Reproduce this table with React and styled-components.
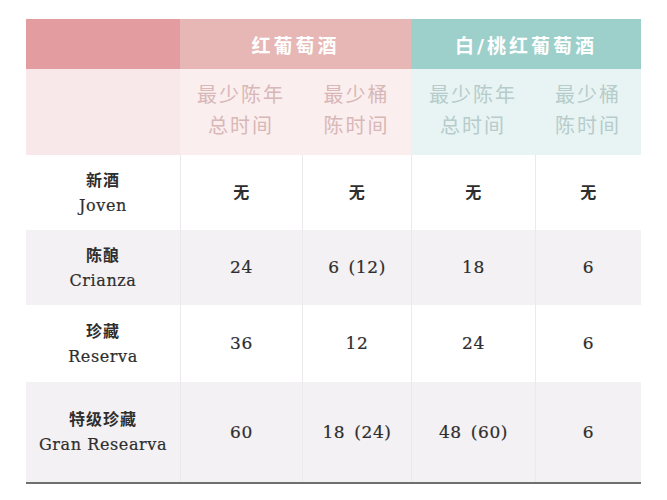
import React from 'react';
import styled, {createGlobalStyle} from 'styled-components';

const GlobalStyle = createGlobalStyle`
  html, body {
    margin: 0;
    padding: 0;
    background: #ffffff;
  }
  body {
    font-family: "DejaVu Serif", "Noto Sans CJK SC", serif;
    color: #333;
  }
`;

const Page = styled.div`
  width: 667px;
  height: 500px;
  padding: 19px 0 0 26px;
  box-sizing: border-box;
`;

const Table = styled.div`
  display: grid;
  width: 615px;
  grid-template-columns: 154px 122px 109px 124px 106px;
  grid-template-rows: 50px 86px 75px 75px 77px 100px;
  border-bottom: 2px solid #6f6f6f;
`;

const GroupCell = styled.div`
  grid-column: ${p => p.$span || 'auto'};
  display: flex;
  align-items: center;
  justify-content: center;
  background: ${p => p.$bg};
  color: #fff;
  font-size: 19px;
  font-weight: 600;
  letter-spacing: 3px;
`;

const SubCell = styled.div`
  display: flex;
  flex-direction: column;
  align-items: center;
  justify-content: center;
  background: ${p => p.$bg};
  color: ${p => p.$fg};
  font-size: 20px;
  line-height: 31px;
  letter-spacing: 2px;
  padding-bottom: 2px;
`;

const BodyCell = styled.div`
  display: flex;
  flex-direction: column;
  align-items: center;
  justify-content: center;
  background: ${p => (p.$shade ? '#f3f1f3' : '#ffffff')};
  border-left: ${p => (p.$first ? 'none' : '1px solid #ebe9eb')};
  font-size: 16px;
  line-height: 25px;
  color: #2e2e2e;
`;

const Zh = styled.span`
  font-weight: 600;
  font-size: 16px;
  letter-spacing: 1px;
`;

const En = styled.span`
  font-size: 16px;
  letter-spacing: 0.6px;
  -webkit-text-stroke: 0.2px #2e2e2e;
`;

const Value = styled.span`
  display: flex;
  align-items: baseline;
  gap: 9px;
  font-size: ${p => (p.$zh ? '16px' : '17px')};
  font-weight: ${p => (p.$zh ? 600 : 400)};
  letter-spacing: 0.6px;
  -webkit-text-stroke: ${p => (p.$zh ? '0' : '0.2px #2e2e2e')};
`;

const RED_SUB = {bg: '#fbeeef', fg: '#d8b7b7'};
const TEAL_SUB = {bg: '#e8f4f3', fg: '#b6cccb'};

const rows = [
  {zh: '新酒', en: 'Joven', values: ['无', '无', '无', '无']},
  {zh: '陈酿', en: 'Crianza', values: ['24', '6 (12)', '18', '6']},
  {zh: '珍藏', en: 'Reserva', values: ['36', '12', '24', '6']},
  {zh: '特级珍藏', en: 'Gran Researva', values: ['60', '18 (24)', '48 (60)', '6']}
];

function renderValue(v) {
  const parts = v.split(' ');
  return (
    <Value $zh={v === '无'}>
      {parts.map(p => (
        <span key={p}>{p}</span>
      ))}
    </Value>
  );
}

export default function App() {
  return (
    <Page>
      <GlobalStyle />
      <Table>
        <GroupCell $bg="#e39c9f" />
        <GroupCell $span="span 2" $bg="#e6b7b4">红葡萄酒</GroupCell>
        <GroupCell $span="span 2" $bg="#9dcfcb">白/桃红葡萄酒</GroupCell>

        <SubCell $bg="#f9e8ea" />
        <SubCell $bg={RED_SUB.bg} $fg={RED_SUB.fg}>
          <span>最少陈年</span>
          <span>总时间</span>
        </SubCell>
        <SubCell $bg={RED_SUB.bg} $fg={RED_SUB.fg}>
          <span>最少桶</span>
          <span>陈时间</span>
        </SubCell>
        <SubCell $bg={TEAL_SUB.bg} $fg={TEAL_SUB.fg}>
          <span>最少陈年</span>
          <span>总时间</span>
        </SubCell>
        <SubCell $bg={TEAL_SUB.bg} $fg={TEAL_SUB.fg}>
          <span>最少桶</span>
          <span>陈时间</span>
        </SubCell>

        {rows.map((row, i) => (
          <React.Fragment key={row.en}>
            <BodyCell $first $shade={i % 2 === 1}>
              <Zh>{row.zh}</Zh>
              <En>{row.en}</En>
            </BodyCell>
            {row.values.map((v, j) => (
              <BodyCell key={j} $shade={i % 2 === 1}>
                {renderValue(v)}
              </BodyCell>
            ))}
          </React.Fragment>
        ))}
      </Table>
    </Page>
  );
}
